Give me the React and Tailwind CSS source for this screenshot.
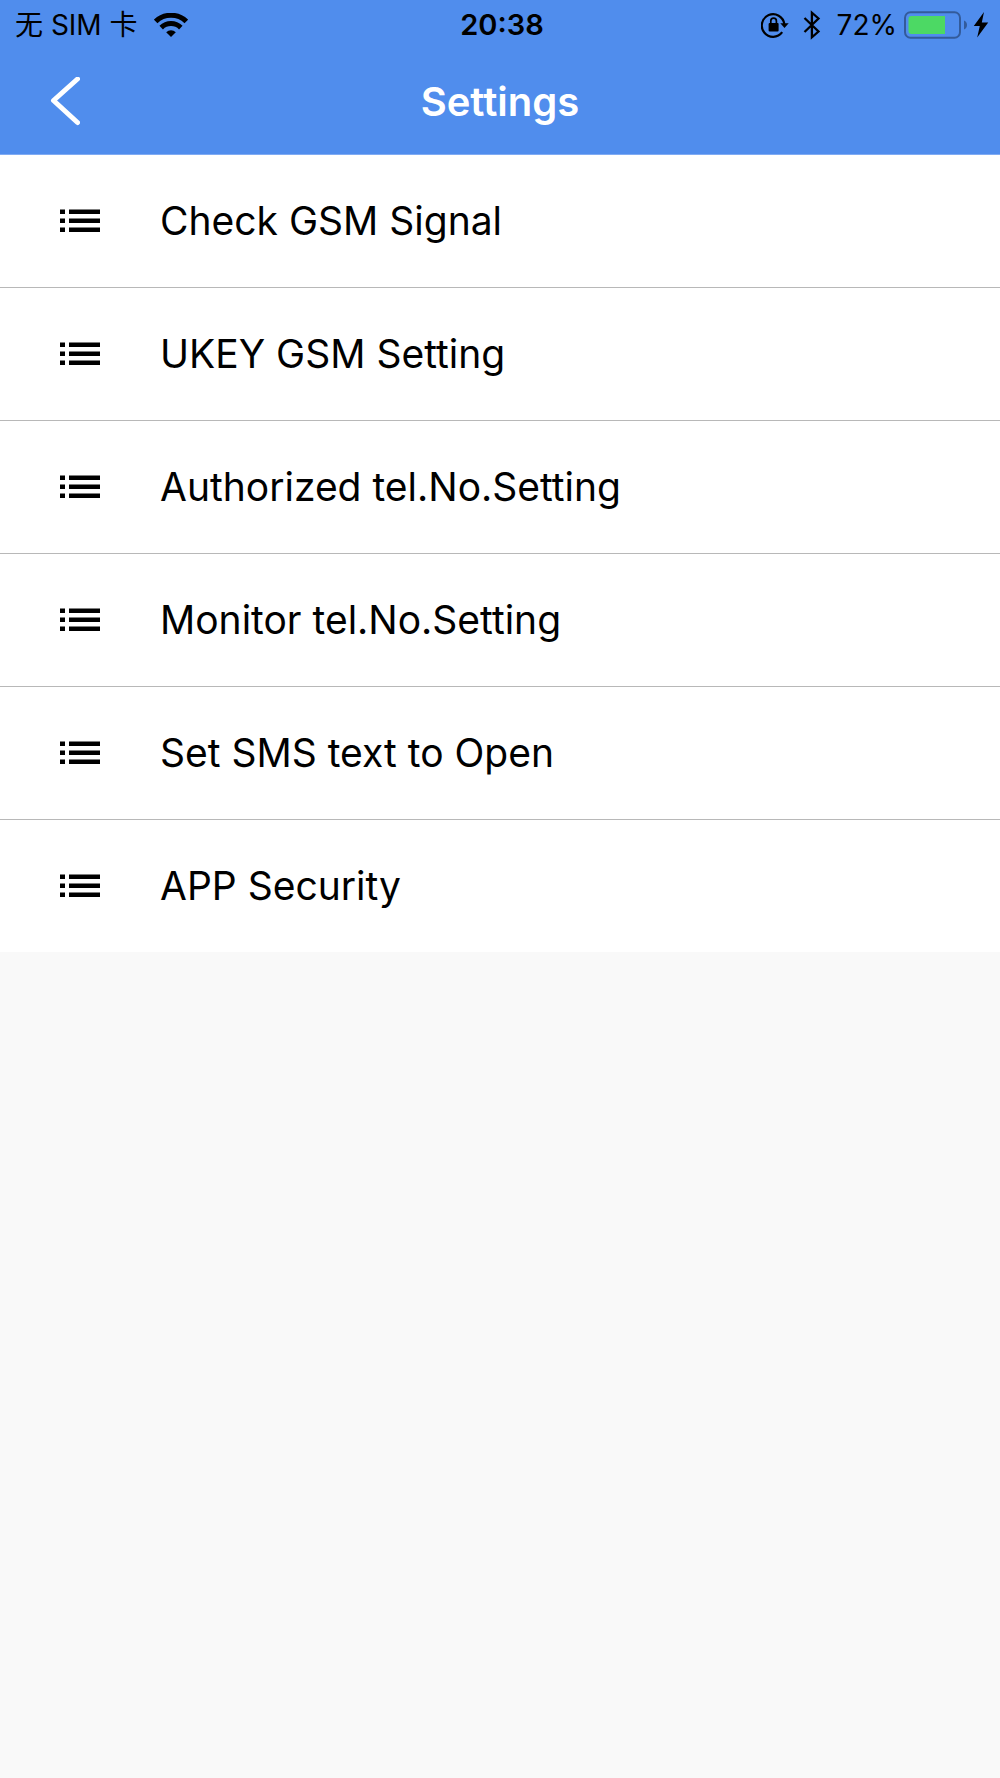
const items = [
  'Check GSM Signal',
  'UKEY GSM Setting',
  'Authorized tel.No.Setting',
  'Monitor tel.No.Setting',
  'Set SMS text to Open',
  'APP Security',
];

function WifiIcon() {
  return (
    <svg className="ml-4 h-6 w-[34px]" viewBox="0 0 34 24" aria-hidden="true">
      <g fill="none" stroke="#000" strokeWidth="5">
        <path d="M1.7 8.4a22 22 0 0 1 30.6 0" />
        <path d="M7.2 14.600a14 14 0 0 1 19.6 0" />
      </g>
      <path d="M12.2 19.2a7.2 7.2 0 0 1 9.6 0L17 24z" />
    </svg>
  );
}

function RotationLockIcon() {
  return (
    <svg className="h-[26px] w-7" viewBox="0 0 28 26" aria-hidden="true">
      <path d="M21.2 20.2A11.3 11.3 0 1 1 23.3 12" fill="none" stroke="#000" strokeWidth="2.2" />
      <path d="M19.3 11.2h8.4L23.5 16z" />
      <rect x="7.600" y="11" width="10" height="8.400" rx="1" />
      <path d="M9.800 12V9a2.8 2.8 0 0 1 5.6 0V12" fill="none" stroke="#000" strokeWidth="1.7" />
    </svg>
  );
}

function BluetoothIcon() {
  return (
    <svg className="ml-[14px] h-[30px] w-[18px]" viewBox="0 0 18 30" aria-hidden="true">
      <path d="M1.5 8l14 13.5-6.6 5.800V2.7l6.6 5.800-14 13.5" fill="none" stroke="#000" strokeWidth="2.3" />
    </svg>
  );
}

function BatteryIcon() {
  return (
    <svg className="ml-[7px] h-7 w-16" viewBox="0 0 64 28" aria-hidden="true">
      <rect x="1" y="1.3" width="55" height="25.4" rx="5.5" fill="none" stroke="#335b9b" strokeWidth="2" />
      <path d="M60 9.5c4 1.5 4 7.500 0 9z" fill="#335b9b" />
      <path d="M7.500 5H41v18H7.500a3 3 0 0 1-3-3V8a3 3 0 0 1 3-3z" fill="#4cd964" />
    </svg>
  );
}

function BoltIcon() {
  return (
    <svg className="ml-[5px] h-[26px] w-4" viewBox="0 0 16 26" aria-hidden="true">
      <path d="M11 0L.8 14h6L4.2 25.500 15.200 10.500H8.800z" />
    </svg>
  );
}

function ListIcon() {
  return (
    <svg className="h-6 w-10 shrink-0" viewBox="0 0 40 24" aria-hidden="true">
      <path d="M0 .5h5V5H0zM9 .5h31V5H9zM0 9.500h5V14H0zM9 9.500h31V14H9zM0 18.500h5V23H0zM9 18.500h31V23H9z" />
    </svg>
  );
}

export default function App() {
  return (
    <div className="min-h-screen bg-[#f9f9f9] font-['Inter','Noto_Sans_CJK_SC',sans-serif] text-black">
      <header className="border-b border-[#80abf3] bg-[#508ded]">
        <div className="grid h-[50px] grid-cols-[1fr_auto_1fr] items-center pr-[11px] pl-[15px] text-[28px] leading-8">
          <div className="flex items-center">
            <span>无 SIM 卡</span>
            <WifiIcon />
          </div>
          <span className="text-[29px] font-semibold">20:38</span>
          <div className="flex items-center justify-end">
            <RotationLockIcon />
            <BluetoothIcon />
            <span className="ml-4">72%</span>
            <BatteryIcon />
            <BoltIcon />
          </div>
        </div>
        <div className="grid h-[104px] grid-cols-[1fr_auto_1fr] items-center px-12">
          <button type="button" aria-label="Back" className="justify-self-start">
            <svg className="h-[50px] w-8" viewBox="0 0 32 50" aria-hidden="true">
              <path d="M29.500 2L5.500 23.500l24 22" fill="none" stroke="#fff" strokeWidth="5" strokeLinecap="round" strokeLinejoin="round" />
            </svg>
          </button>
          <h1 className="text-[40px] leading-[48px] font-semibold text-white">Settings</h1>
        </div>
      </header>

      <ul className="divide-y divide-[#b8b8b8] bg-white">
        {items.map((label) => (
          <li key={label}>
            <button type="button" className="flex h-[132px] w-full items-center gap-[60px] px-[60px] text-left text-[39px] leading-[50px]">
              <ListIcon />
              <span>{label}</span>
            </button>
          </li>
        ))}
      </ul>
    </div>
  );
}
